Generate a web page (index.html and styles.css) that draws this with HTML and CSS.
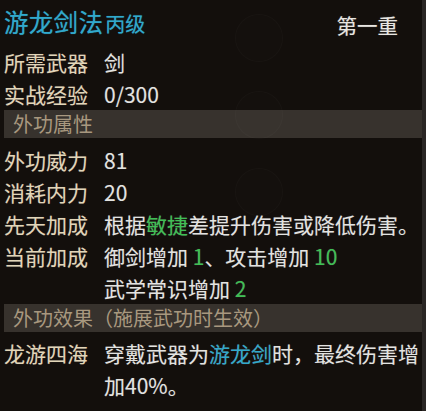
FILE: index.html
```html
<!DOCTYPE html>
<html lang="zh-CN">
<head>
<meta charset="utf-8">
<link rel="stylesheet" href="styles.css">
</head>
<body>
<div class="panel">
  <div class="ghost g1"></div>
  <div class="ghost g2"></div>
  <div class="ghost g3"></div>
  <div class="title-row">
    <div class="title"><span class="name">游龙剑法</span><span class="grade">丙级</span></div>
    <div class="level">第一重</div>
  </div>
  <div class="row"><span class="label">所需武器</span><span class="value">剑</span></div>
  <div class="row"><span class="label">实战经验</span><span class="value">0/300</span></div>
  <div class="bar">外功属性</div>
  <div class="row first"><span class="label">外功威力</span><span class="value">81</span></div>
  <div class="row"><span class="label">消耗内力</span><span class="value">20</span></div>
  <div class="row"><span class="label">先天加成</span><span class="value">根据<span class="green">敏捷</span>差提升伤害或降低伤害。</span></div>
  <div class="row"><span class="label">当前加成</span><span class="value">御剑增加 <span class="green">1</span>、攻击增加 <span class="green">10</span></span></div>
  <div class="row"><span class="label"></span><span class="value">武学常识增加 <span class="green">2</span></span></div>
  <div class="bar">外功效果（施展武功时生效）</div>
  <div class="row effect"><span class="label">龙游四海</span><span class="value">穿戴武器为<span class="cyan">游龙剑</span>时，最终伤害增加40%。</span></div>
</div>
</body>
</html>
```

FILE: styles.css
```css
html, body {
  margin: 0;
  padding: 0;
}
body {
  background: #2a2624;
  width: 426px;
  height: 411px;
  overflow: hidden;
  font-family: "Noto Sans CJK SC", "Noto Sans", sans-serif;
}
.panel {
  position: relative;
  width: 422px;
  height: 411px;
  background: #130f0c;
  padding-left: 4px;
  box-sizing: border-box;
}
.ghost {
  position: absolute;
  left: 235px;
  width: 46px;
  height: 46px;
  border-radius: 50%;
  border: 1px solid rgba(255, 255, 255, 0.018);
  background: rgba(255, 255, 255, 0.006);
  pointer-events: none;
}
.g1 { top: 14px; }
.g2 { top: 91px; }
.g3 { top: 168px; }
.title-row {
  height: 46px;
  display: flex;
  align-items: center;
  justify-content: space-between;
  padding-right: 24px;
}
.title {
  display: flex;
  align-items: baseline;
  color: #31a9cc;
  margin-top: -3px;
  text-shadow: 0 0 1px rgba(49, 169, 204, 0.6);
}
.name {
  font-size: 24.5px;
  letter-spacing: 0.3px;
}
.grade {
  font-size: 20px;
  margin-left: 2px;
}
.level {
  color: #e8e6e2;
  font-size: 20.5px;
  margin-top: 3px;
  text-shadow: 0 0 1px rgba(255, 255, 255, 0.4);
}
.row {
  display: grid;
  grid-template-columns: 100px 1fr;
  font-size: 21px;
  line-height: 32px;
  height: 32px;
  text-shadow: 0 0 1px rgba(255, 255, 255, 0.25);
}
.row.first {
  margin-top: 6px;
}
.row.effect {
  height: auto;
  margin-top: 5px;
}
.label {
  color: #e2d5b8;
  white-space: nowrap;
}
.value {
  color: #e3e3e1;
}
.green {
  color: #3fbf55;
}
.cyan {
  color: #31a9cc;
}
.bar {
  height: 28px;
  line-height: 28px;
  background: #37322d;
  color: #a8987f;
  font-size: 20px;
  padding-left: 9px;
}
```
